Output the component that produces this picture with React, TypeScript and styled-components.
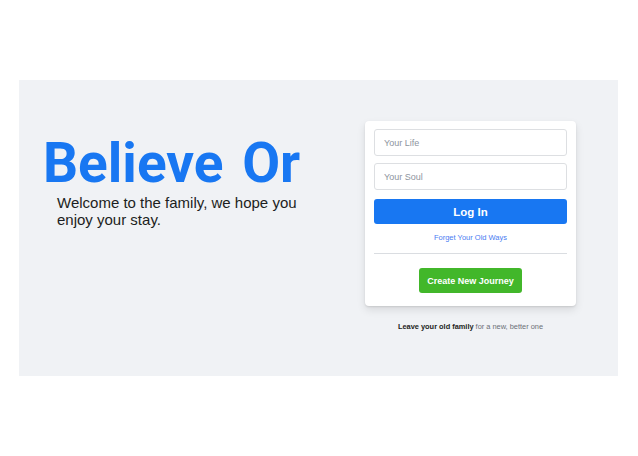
import * as React from "react";
import styled, { createGlobalStyle } from "styled-components";

const GlobalStyle = createGlobalStyle`
  html, body {
    margin: 0;
    padding: 0;
    background: #ffffff;
    font-family: "Liberation Sans", Arial, sans-serif;
  }
`;

const Page = styled.div`
  padding: 80px 20px 80px 19px;
  box-sizing: border-box;
  height: 456px;
`;

const Stage = styled.main`
  display: flex;
  justify-content: space-between;
  height: 296px;
  padding: 41px 42px 0 24px;
  box-sizing: border-box;
  background: #f0f2f5;
`;

const Intro = styled.section`
  display: flex;
  flex-direction: column;
  padding-top: 15px;
`;

const Headline = styled.h1`
  margin: 0;
  font-family: Roboto, "Noto Sans", sans-serif;
  font-weight: 700;
  font-size: 55px;
  line-height: 55px;
  word-spacing: 5px;
  color: #1877f2;
`;

const Tagline = styled.h2`
  margin: 3px 0 0;
  padding-left: 14px;
  width: 250px;
  font-weight: 400;
  font-size: 15px;
  line-height: 17px;
  color: #1c1e21;
`;

const Side = styled.section`
  display: flex;
  flex-direction: column;
  align-items: center;
  width: 211px;
`;

const Card = styled.form`
  display: flex;
  flex-direction: column;
  width: 100%;
  box-sizing: border-box;
  padding: 8px 9px 13px;
  background: #ffffff;
  border-radius: 4px;
  box-shadow: 0 1px 2px rgba(0, 0, 0, 0.1), 0 4px 8px rgba(0, 0, 0, 0.1);
`;

const Field = styled.input`
  height: 27px;
  margin-bottom: 7px;
  padding: 0 9px;
  box-sizing: border-box;
  border: 1px solid #dddfe2;
  border-radius: 3px;
  font-family: inherit;
  font-size: 9px;
  color: #1c1e21;
  outline: none;

  &::placeholder {
    color: #8d949e;
  }
`;

const Action = styled.button<{ $tone: "blue" | "green"; $wide?: boolean }>`
  height: 25px;
  border: none;
  border-radius: 3px;
  padding: 0 8px;
  font-family: inherit;
  font-weight: 700;
  font-size: ${({ $wide }) => ($wide ? "11.5px" : "9px")};
  color: #ffffff;
  background: ${({ $tone }) => ($tone === "blue" ? "#1877f2" : "#42b72a")};
  align-self: ${({ $wide }) => ($wide ? "stretch" : "center")};
  width: ${({ $wide }) => ($wide ? "auto" : "103px")};
  cursor: pointer;
`;

const Forgot = styled.a`
  margin-top: 9px;
  text-align: center;
  font-size: 7.5px;
  line-height: 9px;
  color: #4a7cf2;
  text-decoration: none;
`;

const Divider = styled.div`
  margin: 11px 0 14px;
  border-bottom: 1px solid #dadde1;
`;

const Note = styled.p`
  margin: 16px 0 0;
  font-size: 7.4px;
  color: #6b6f75;

  b {
    color: #1c1e21;
  }
`;

const App = () => {
  const [life, setLife] = React.useState("");
  const [soul, setSoul] = React.useState("");

  return (
    <>
      <GlobalStyle />
      <Page>
        <Stage>
          <Intro>
            <Headline>Believe Or</Headline>
            <Tagline>Welcome to the family, we hope you enjoy your stay.</Tagline>
          </Intro>
          <Side>
            <Card onSubmit={(e) => e.preventDefault()}>
              <Field
                placeholder="Your Life"
                value={life}
                onChange={(e) => setLife(e.target.value)}
              />
              <Field
                type="password"
                placeholder="Your Soul"
                value={soul}
                onChange={(e) => setSoul(e.target.value)}
              />
              <Action $tone="blue" $wide type="submit" style={{ marginTop: 2 }}>
                Log In
              </Action>
              <Forgot href="#">Forget Your Old Ways</Forgot>
              <Divider />
              <Action $tone="green" type="button">
                Create New Journey
              </Action>
            </Card>
            <Note>
              <b>Leave your old family</b> for a new, better one
            </Note>
          </Side>
        </Stage>
      </Page>
    </>
  );
};

export default App;
